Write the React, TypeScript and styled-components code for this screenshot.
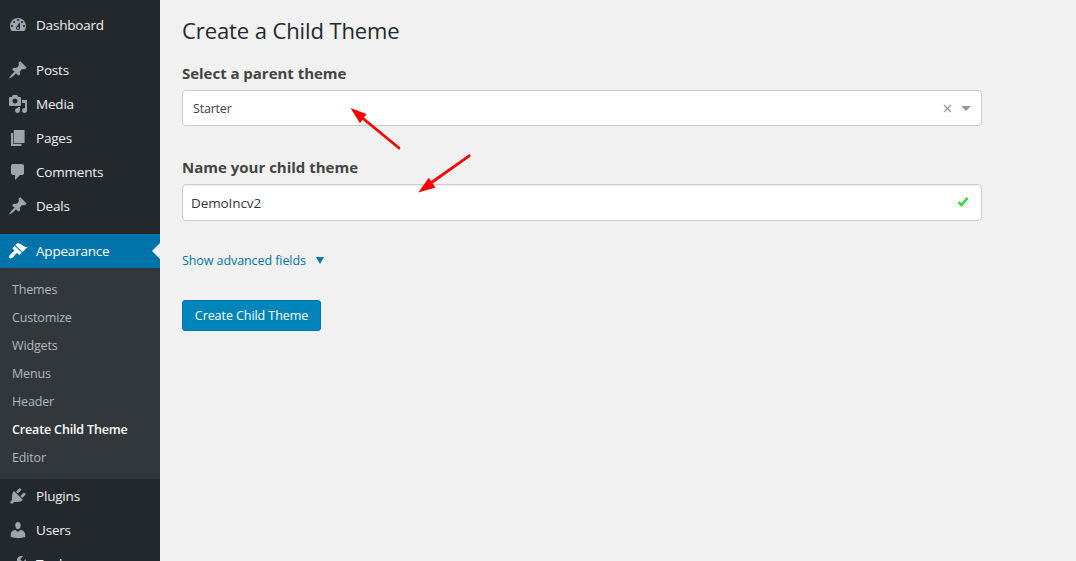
import React from 'react'
import styled, { createGlobalStyle, css } from 'styled-components'

const icons = {
    dashboard: 'M3.76 16h12.48c1.1-1.37 1.76-3.11 1.76-5 0-4.42-3.58-8-8-8s-8 3.58-8 8c0 1.89.66 3.63 1.76 5zM10 4c.55 0 1 .45 1 1s-.45 1-1 1-1-.45-1-1 .45-1 1-1zM6 6c.55 0 1 .45 1 1s-.45 1-1 1-1-.45-1-1 .45-1 1-1zm8 0c.55 0 1 .45 1 1s-.45 1-1 1-1-.45-1-1 .45-1 1-1zm-5.37 5.55L12 7v6c0 1.1-.9 2-2 2s-2-.9-2-2c0-.57.24-1.08.63-1.45zM4 10c.55 0 1 .45 1 1s-.45 1-1 1-1-.45-1-1 .45-1 1-1zm12 0c.55 0 1 .45 1 1s-.45 1-1 1-1-.45-1-1 .45-1 1-1zm-5 3c0-.55-.45-1-1-1s-1 .45-1 1 .45 1 1 1 1-.45 1-1z',
    pin: 'M10.44 3.02l1.82-1.82 6.36 6.35-1.83 1.82c-1.05-.68-2.48-.57-3.41.36l-.75.75c-.92.93-1.04 2.35-.35 3.41l-1.83 1.82-2.41-2.41-2.8 2.79c-.42.42-3.38 2.71-3.8 2.29s1.86-3.39 2.28-3.81l2.79-2.79L4.1 9.36l1.83-1.82c1.05.69 2.48.57 3.4-.36l.75-.75c.93-.92 1.05-2.35.36-3.41z',
    media: 'M13 11V4c0-.55-.45-1-1-1h-1.67L9 1H5L3.67 3H2c-.55 0-1 .45-1 1v7c0 .55.45 1 1 1h10c.55 0 1-.45 1-1zM7 4.5c1.38 0 2.5 1.12 2.5 2.5S8.38 9.5 7 9.5 4.5 8.38 4.5 7 5.62 4.5 7 4.5zM14 6h5v10.5c0 1.38-1.12 2.5-2.5 2.5S14 17.88 14 16.5s1.12-2.5 2.5-2.5c.17 0 .34.02.5.05V9h-3V6zm-4 8.05V13h2v3.5c0 1.38-1.12 2.5-2.5 2.5S7 17.88 7 16.5 8.12 14 9.5 14c.17 0 .34.02.5.05z',
    page: 'M5.8 15V2h10.8v13H5.8zM5.1 15.8h8.4V18H3V5h2.1v10.8z',
    comment: 'M5 2h9c1.1 0 2 .9 2 2v7c0 1.1-.9 2-2 2h-2l-5 5v-5H5c-1.1 0-2-.9-2-2V4c0-1.1.9-2 2-2z',
    brush: 'M14.48 11.06L7.41 3.99l1.5-1.5c.5-.56 2.3-.47 3.51.32 1.21.8 1.43 1.28 2.91 2.1 1.18.64 2.45 1.26 4.45.85zm-.71.71L6.7 4.7 4.93 6.47c-.39.39-.39 1.02 0 1.41l1.06 1.06c.39.39.39 1.03 0 1.42-.6.6-1.43 1.11-2.21 1.69-.35.26-.7.53-1.01.84C1.43 14.23.4 16.08 1.4 17.07c.99 1 2.84-.03 4.18-1.36.31-.31.58-.66.85-1.02.57-.78 1.08-1.61 1.69-2.21.39-.39 1.02-.39 1.41 0l1.06 1.06c.39.39 1.02.39 1.41 0z',
    plug: 'M13.11 4.36L9.87 7.6 8 5.73l3.24-3.24c.35-.34 1.05-.2 1.56.32.52.51.66 1.21.31 1.55zm-8 1.77l.91-1.12 9.01 9.01-1.19.84c-.71.71-2.63 1.16-3.82 1.16H6.14L4.9 17.26c-.59.59-1.54.59-2.12 0-.59-.58-.59-1.53 0-2.12l1.24-1.24v-3.88c0-1.13.4-3.19 1.09-3.89zm7.26 3.97l3.24-3.24c.34-.35 1.04-.21 1.55.31.52.51.66 1.21.31 1.55l-3.24 3.25z',
    user: 'M10 9.25c-2.27 0-2.73-3.44-2.73-3.44C7 4.02 7.82 2 9.97 2c2.16 0 2.98 2.02 2.71 3.81 0 0-.41 3.44-2.68 3.44zm0 2.57L12.72 10c2.39 0 4.52 2.33 4.52 4.53v2.49s-3.65 1.13-7.24 1.13c-3.65 0-7.24-1.13-7.24-1.13v-2.49c0-2.25 1.94-4.48 4.47-4.48z',
    wrench: 'M16.68 9.77c-1.34 1.34-3.3 1.67-4.95.99l-5.41 6.52c-.99.99-2.59.99-3.58 0s-.99-2.59 0-3.57l6.52-5.42c-.68-1.65-.35-3.61.99-4.95 1.28-1.28 3.12-1.62 4.72-1.06l-2.89 2.89 2.82 2.82 2.86-2.87c.53 1.58.18 3.39-1.08 4.65zM3.81 16.21c.4.39 1.04.39 1.43 0 .4-.4.4-1.04 0-1.43-.39-.4-1.03-.4-1.43 0-.39.39-.39 1.03 0 1.43z',
}

type IconName = keyof typeof icons

const submenu = ['Themes', 'Customize', 'Widgets', 'Menus', 'Header', 'Create Child Theme', 'Editor']

function Item({ icon, label, active }: { icon: IconName; label: string; active?: boolean }) {
    return (
        <MenuItem $active={active}>
            <svg width="20" height="20" viewBox="0 0 20 20"><path d={icons[icon]} /></svg>
            <span>{label}</span>
        </MenuItem>
    )
}

function Sidebar() {
    return (
        <SidebarContainer>
            <Item icon="dashboard" label="Dashboard" />
            <Separator />
            <Item icon="pin" label="Posts" />
            <Item icon="media" label="Media" />
            <Item icon="page" label="Pages" />
            <Item icon="comment" label="Comments" />
            <Item icon="pin" label="Deals" />
            <Separator />
            <Item icon="brush" label="Appearance" active />
            <Submenu>
                {submenu.map((label) => (
                    <SubmenuItem key={label} $current={label === 'Create Child Theme'}>
                        <span>{label}</span>
                    </SubmenuItem>
                ))}
            </Submenu>
            <Item icon="plug" label="Plugins" />
            <Item icon="user" label="Users" />
            <Item icon="wrench" label="Tools" />
        </SidebarContainer>
    )
}

function App() {
    return (
        <>
            <GlobalStyle />
            <Page>
                <Sidebar />
                {/* Form */}
                <Content>
                    <Title><span>Create a Child Theme</span></Title>
                    <Label><span>Select a parent theme</span></Label>
                    <SelectBox>
                        <span>Starter</span>
                        <svg width="9" height="9" viewBox="0 0 9 9">
                            <path d="M1 1l7 7M8 1l-7 7" stroke="#8f9f95" strokeWidth="1.15" />
                        </svg>
                        <svg width="10" height="5" viewBox="0 0 10 5"><path d="M0 0h10L5 5z" fill="#999" /></svg>
                    </SelectBox>
                    <NameLabel><span>Name your child theme</span></NameLabel>
                    <InputBox>
                        <span>DemoIncv2</span>
                        <svg width="12" height="11" viewBox="0 0 12 11">
                            <path d="M1.6 5.2l2.9 2.8L10.6 .8" stroke="#3bd63b" strokeWidth="2.6" fill="none" />
                        </svg>
                    </InputBox>
                    <Advanced>
                        <span>Show advanced fields</span>
                        <svg width="8" height="7" viewBox="0 0 8 7"><path d="M0 0h8L4 7z" fill="#0073aa" /></svg>
                    </Advanced>
                    <Button><span>Create Child Theme</span></Button>
                </Content>
                {/* Pointers drawn over the fields */}
                <Arrows width="130" height="100" viewBox="345 100 130 100">
                    <path d="M399 148L360 116M469.2 155.8L428 185" />
                    <polygon points="350.5,108 366.5,114 360,123.3" />
                    <polygon points="418.3,192.5 428.8,177.8 435.5,187.5" />
                </Arrows>
            </Page>
        </>
    )
}

export default App

const GlobalStyle = createGlobalStyle`
    * {
        box-sizing: border-box;
    }

    body {
        margin: 0;
        background-color: #f1f1f1;
        font-family: "Open Sans", "Noto Sans", sans-serif;
        font-size: 13px;
        color: #444;
    }
`

const Page = styled.div`
    position: relative;
    display: flex;
    height: 561px;
    overflow: hidden;
`

const SidebarContainer = styled.nav`
    flex: none;
    width: 160px;
    padding-top: 8px;
    background-color: #23282d;
`

const MenuItem = styled.div<{ $active?: boolean }>`
    position: relative;
    display: flex;
    align-items: center;
    height: 34px;
    padding-left: 8px;
    gap: 8px;
    font-size: 13.5px;
    letter-spacing: -0.2px;
    line-height: 18px;
    color: #f1f1f1;

    > svg {
        fill: #a0a5aa;
    }

    ${({ $active }) => $active && css`
        background-color: #0073aa;
        color: white;

        > svg {
            fill: white;
        }

        &::after {
            content: '';
            position: absolute;
            right: 0;
            top: 9px;
            border: 8px solid transparent;
            border-left: 0;
            border-right-color: #f1f1f1;
        }
    `}
`

const Separator = styled.div`
    height: 11px;
`

const Submenu = styled.div`
    padding: 8px 0 7px;
    background-color: #32373c;
`

const SubmenuItem = styled.div<{ $current?: boolean }>`
    height: 28px;
    padding-left: 12px;
    line-height: 28px;
    font-size: 12.5px;
    letter-spacing: -0.15px;
    color: #b4b9be;

    ${({ $current }) => $current && css`
        font-weight: 600;
        color: white;
    `}
`

const Content = styled.main`
    display: flex;
    flex-direction: column;
    align-items: flex-start;
    width: 822px;
    padding: 15px 0 0 22px;
`

const Title = styled.h1`
    margin: 0;
    font-size: 22px;
    font-weight: 400;
    letter-spacing: -0.1px;
    line-height: 30px;
    color: #23282d;
`

const Label = styled.label`
    margin-top: 18px;
    font-size: 15px;
    font-weight: 700;
    letter-spacing: -0.03px;
    line-height: 20px;
`

const NameLabel = styled(Label)`
    margin-top: 31px;
    letter-spacing: 0;
`

const Field = styled.div`
    display: flex;
    align-items: center;
    width: 100%;
    margin-top: 7px;
    border: 1px solid #ccc;
    border-radius: 4px;
    background-color: white;

    > span {
        flex: 1;
    }
`

const SelectBox = styled(Field)`
    height: 36px;
    padding: 0 10px;
    gap: 9px;
    font-size: 12.5px;
    letter-spacing: -0.2px;
`

const InputBox = styled(Field)`
    height: 37px;
    padding: 0 12px 0 8px;
    font-size: 13.5px;
    letter-spacing: -0.1px;
    color: #32373c;
    box-shadow: inset 0 1px 2px rgba(0, 0, 0, 0.07);
`

const Advanced = styled.a`
    display: flex;
    align-items: center;
    gap: 10px;
    margin-top: 30px;
    font-size: 12.5px;
    letter-spacing: -0.08px;
    line-height: 20px;
    color: #0073aa;

    > svg {
        margin-bottom: 1px;
    }
`

const Button = styled.button`
    height: 31px;
    width: 139px;
    margin-top: 29px;
    padding: 0;
    border: 1px solid #0073aa;
    border-radius: 3px;
    background-color: #0085ba;
    font-family: inherit;
    font-size: 12.5px;
    letter-spacing: -0.07px;
    color: white;
`

const Arrows = styled.svg`
    position: absolute;
    left: 345px;
    top: 100px;
    pointer-events: none;

    path {
        stroke: #f00;
        stroke-width: 2.8;
        stroke-linecap: round;
    }

    polygon {
        fill: #f00;
    }
`
